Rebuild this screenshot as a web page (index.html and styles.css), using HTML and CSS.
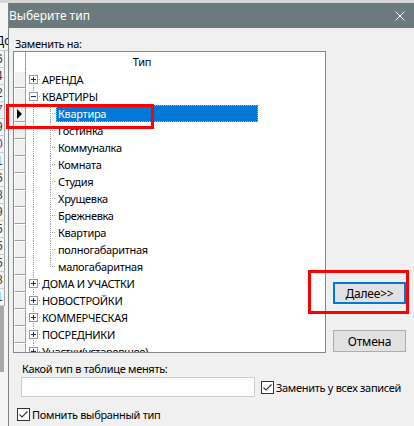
FILE: index.html
```html
<!DOCTYPE html>
<html lang="ru">
<head>
<meta charset="utf-8">
<title>Выберите тип</title>
<link rel="stylesheet" href="styles.css">
</head>
<body>
<div class="desk-top"></div>
<div class="desk">
  <!-- edge of the table window behind the dialog -->
  <div class="bg-app">
    <div class="bg-head"><span>Дс</span></div>
    <div class="bg-cell"><span>6</span></div>
    <div class="bg-cell"><span>4</span></div>
    <div class="bg-cell"><span>2</span></div>
    <div class="bg-cell red"><span>7</span></div>
    <div class="bg-cell"><span>9</span></div>
    <div class="bg-cell blue"><span>0</span></div>
    <div class="bg-cell"><span>1</span></div>
    <div class="bg-cell"><span>6</span></div>
    <div class="bg-cell"><span>8</span></div>
    <div class="bg-cell"><span>9</span></div>
    <div class="bg-cell"><span>5</span></div>
    <div class="bg-cell"><span>5</span></div>
    <div class="bg-cell"><span>5</span></div>
    <div class="bg-cell"><span>8</span></div>
    <div class="bg-cell"><span>1</span></div>
    <div class="bg-gray"></div>
  </div>

  <div class="dialog">
    <div class="titlebar">
      <span class="title">Выберите тип</span>
      <svg class="close" viewBox="0 0 10 10" width="10" height="10"><path d="M0.5 0.5L9.5 9.5M9.5 0.5L0.5 9.5" stroke="#fff" stroke-width="1"/></svg>
    </div>

    <div class="dlg-body">
      <div class="upper">
        <div class="left-col">
          <div class="caption">Заменить на:</div>
          <div class="grid">
            <div class="grid-head">
              <div class="rh-head"></div>
              <div class="col-head">Тип</div>
            </div>
            <div class="row"><div class="rh"></div><div class="cell root first"><svg class="exp" viewBox="0 0 9 9"><rect x="0.5" y="0.5" width="8" height="8" fill="#fff" stroke="#8e9ba6"/><path d="M2 4.5h5M4.5 2v5" stroke="#1c2d5a"/></svg><span class="lbl">АРЕНДА</span></div></div>
            <div class="row"><div class="rh"></div><div class="cell root"><svg class="exp" viewBox="0 0 9 9"><rect x="0.5" y="0.5" width="8" height="8" fill="#fff" stroke="#8e9ba6"/><path d="M2 4.5h5" stroke="#1c2d5a"/></svg><span class="lbl">КВАРТИРЫ</span></div></div>
            <div class="row"><div class="rh"><i class="cur"></i></div><div class="cell child"><span class="lbl sel">Квартира</span></div></div>
            <div class="row"><div class="rh"></div><div class="cell child"><span class="lbl">Гостинка</span></div></div>
            <div class="row"><div class="rh"></div><div class="cell child"><span class="lbl">Коммуналка</span></div></div>
            <div class="row"><div class="rh"></div><div class="cell child"><span class="lbl">Комната</span></div></div>
            <div class="row"><div class="rh"></div><div class="cell child"><span class="lbl">Студия</span></div></div>
            <div class="row"><div class="rh"></div><div class="cell child"><span class="lbl">Хрущевка</span></div></div>
            <div class="row"><div class="rh"></div><div class="cell child"><span class="lbl">Брежневка</span></div></div>
            <div class="row"><div class="rh"></div><div class="cell child"><span class="lbl">Квартира</span></div></div>
            <div class="row"><div class="rh"></div><div class="cell child"><span class="lbl">полногабаритная</span></div></div>
            <div class="row"><div class="rh"></div><div class="cell child last"><span class="lbl">малогабаритная</span></div></div>
            <div class="row"><div class="rh"></div><div class="cell root"><svg class="exp" viewBox="0 0 9 9"><rect x="0.5" y="0.5" width="8" height="8" fill="#fff" stroke="#8e9ba6"/><path d="M2 4.5h5M4.5 2v5" stroke="#1c2d5a"/></svg><span class="lbl">ДОМА И УЧАСТКИ</span></div></div>
            <div class="row"><div class="rh"></div><div class="cell root"><svg class="exp" viewBox="0 0 9 9"><rect x="0.5" y="0.5" width="8" height="8" fill="#fff" stroke="#8e9ba6"/><path d="M2 4.5h5M4.5 2v5" stroke="#1c2d5a"/></svg><span class="lbl">НОВОСТРОЙКИ</span></div></div>
            <div class="row"><div class="rh"></div><div class="cell root"><svg class="exp" viewBox="0 0 9 9"><rect x="0.5" y="0.5" width="8" height="8" fill="#fff" stroke="#8e9ba6"/><path d="M2 4.5h5M4.5 2v5" stroke="#1c2d5a"/></svg><span class="lbl">КОММЕРЧЕСКАЯ</span></div></div>
            <div class="row"><div class="rh"></div><div class="cell root"><svg class="exp" viewBox="0 0 9 9"><rect x="0.5" y="0.5" width="8" height="8" fill="#fff" stroke="#8e9ba6"/><path d="M2 4.5h5M4.5 2v5" stroke="#1c2d5a"/></svg><span class="lbl">ПОСРЕДНИКИ</span></div></div>
            <div class="row"><div class="rh"></div><div class="cell root"><svg class="exp" viewBox="0 0 9 9"><rect x="0.5" y="0.5" width="8" height="8" fill="#fff" stroke="#8e9ba6"/><path d="M2 4.5h5M4.5 2v5" stroke="#1c2d5a"/></svg><span class="lbl">Участки(устаревшее)</span></div></div>
          </div>
        </div>
        <div class="right-col">
          <button class="btn default">Далее&gt;&gt;</button>
          <button class="btn cancel">Отмена</button>
        </div>
      </div>

      <div class="bottom">
        <div class="bottom-caption">Какой тип в таблице менять:</div>
        <div class="bottom-row">
          <div class="textbox"></div>
          <label class="check">
            <svg class="box" viewBox="0 0 13 13" width="13" height="13"><rect x="0.5" y="0.5" width="12" height="12" fill="#fff" stroke="#333"/><path d="M2.5 6.5L5 9L10.5 3.5" fill="none" stroke="#333" stroke-width="1.1"/></svg>
            <span>Заменить у всех записей</span>
          </label>
        </div>
        <label class="check remember">
          <svg class="box" viewBox="0 0 13 13" width="13" height="13"><rect x="0.5" y="0.5" width="12" height="12" fill="#fff" stroke="#333"/><path d="M2.5 6.5L5 9L10.5 3.5" fill="none" stroke="#333" stroke-width="1.1"/></svg>
          <span>Помнить выбранный тип</span>
        </label>
      </div>
    </div>
  </div>
</div>

<!-- annotation frames drawn over the dialog -->
<div class="mark mark-row"></div>
<div class="mark mark-btn"></div>
</body>
</html>
```

FILE: styles.css
```css
* {
  box-sizing: border-box;
}

html,
body {
  margin: 0;
  padding: 0;
}

body {
  position: relative;
  width: 414px;
  height: 426px;
  overflow: hidden;
  background: #f0f0f0;
  color: #000;
  font-family: "Noto Sans", "Liberation Sans", sans-serif;
  font-size: 11px;
  letter-spacing: -0.3px;
}

/* desktop strip above the dialog */
.desk-top {
  height: 3px;
  background: #d5d6d6;
}

.desk {
  display: flex;
  height: 423px;
}

/* table window behind the dialog */
.bg-app {
  width: 8px;
  flex: none;
  overflow: hidden;
  display: flex;
  flex-direction: column;
  background: #f5f5f5;
  font-family: "Liberation Sans", sans-serif;
  font-size: 12px;
  letter-spacing: 0;
}

.bg-head {
  height: 48px;
  padding-top: 30px;
  border-bottom: 1px solid #c8c8c8;
}

.bg-head span,
.bg-cell span {
  display: block;
  margin-left: -4px;
  line-height: 16px;
  white-space: nowrap;
}

.bg-cell {
  height: 17px;
  width: 5px;
  flex: none;
  overflow: hidden;
  border-bottom: 1px solid #c8c8c8;
  border-right: 1px solid #a8a8a8;
  color: #3a3a3a;
}

.bg-cell.red {
  color: #b3262a;
}

.bg-cell.blue {
  color: #5b2a8c;
}

.bg-gray {
  height: 66px;
  width: 4px;
  background: #a9a9a9;
  flex: none;
}

/* dialog window */
.dialog {
  flex: 1;
  display: flex;
  flex-direction: column;
  border-left: 1px solid #7b878a;
  background: #f0f0f0;
}

.titlebar {
  height: 25px;
  flex: none;
  display: flex;
  align-items: center;
  justify-content: space-between;
  padding-right: 9px;
  background: #6b7a7d;
  color: #fff;
}

.title {
  font-size: 12px;
  line-height: 16px;
  letter-spacing: 0;
}

.close {
  display: block;
}

.dlg-body {
  padding-top: 9px;
}

.upper {
  display: flex;
}

.left-col {
  display: flex;
  flex-direction: column;
}

.caption {
  height: 14px;
  line-height: 14px;
  padding-left: 6px;
}

/* tree grid */
.grid {
  margin-left: 4px;
  width: 313px;
  height: 302px;
  overflow: hidden;
  border: 1px solid #828790;
  background: #fff;
}

.grid-head {
  display: flex;
  height: 19px;
}

.rh-head {
  width: 12px;
  flex: none;
  border-right: 1px solid #a0a0a0;
}

.col-head {
  width: 232px;
  text-align: center;
  line-height: 20px;
}

.row {
  display: flex;
  height: 17px;
}

.rh {
  width: 12px;
  flex: none;
  display: flex;
  align-items: center;
  padding-left: 2px;
  background: #f0f0f0;
  border-top: 1px solid #fff;
  border-left: 1px solid #fff;
  border-right: 1px solid #a0a0a0;
  border-bottom: 1px solid #a0a0a0;
}

.cur {
  width: 0;
  height: 0;
  border-left: 5px solid #000;
  border-top: 5px solid transparent;
  border-bottom: 5px solid transparent;
}

.cell {
  width: 232px;
  flex: none;
  display: flex;
  align-items: center;
  white-space: nowrap;
  background-repeat: no-repeat;
}

/* dotted guide lines of the tree */
.root {
  background-image:
    repeating-linear-gradient(to bottom, #a0a0a0 0 1px, transparent 1px 2px),
    repeating-linear-gradient(to right, #a0a0a0 0 1px, transparent 1px 2px);
  background-size: 1px 17px, 8px 1px;
  background-position: 7px 0, 7px 8px;
}

.root.first {
  background-size: 1px 9px, 8px 1px;
  background-position: 7px 8px, 7px 8px;
}

.child {
  background-image:
    repeating-linear-gradient(to bottom, #a0a0a0 0 1px, transparent 1px 2px),
    repeating-linear-gradient(to bottom, #a0a0a0 0 1px, transparent 1px 2px),
    repeating-linear-gradient(to right, #a0a0a0 0 1px, transparent 1px 2px);
  background-size: 1px 17px, 1px 17px, 6px 1px;
  background-position: 7px 0, 24px 0, 24px 8px;
}

.child.last {
  background-size: 1px 17px, 1px 9px, 6px 1px;
}

.exp {
  width: 9px;
  height: 9px;
  margin-left: 3px;
  flex: none;
  display: block;
}

.root .lbl {
  margin-left: 4px;
}

.child .lbl {
  margin-left: 30px;
  padding: 0 2px;
  height: 17px;
  line-height: 17px;
}

.child .lbl.sel {
  flex: 1;
  background: #0078d7;
  color: #fff;
  border: 1px dotted #f0a64a;
  padding: 0 1px;
  line-height: 15px;
}

/* buttons */
.right-col {
  display: flex;
  flex-direction: column;
  padding-top: 245px;
  margin-left: 7px;
}

.btn {
  width: 73px;
  height: 22px;
  padding: 0;
  background: #e1e1e1;
  border: 1px solid #adadad;
  border-radius: 0;
  color: #000;
  font-family: inherit;
  font-size: 12px;
  letter-spacing: -0.2px;
}

.btn.default {
  border: 2px solid #0078d7;
}

.btn.cancel {
  margin-top: 26px;
}

/* lower part */
.bottom {
  padding-top: 9px;
}

.bottom-caption {
  height: 14px;
  line-height: 14px;
  padding-left: 13px;
}

.bottom-row {
  display: flex;
  align-items: center;
  margin-top: 1px;
  padding-left: 12px;
}

.textbox {
  width: 234px;
  height: 20px;
  background: #fff;
  border: 1px solid #cccccc;
}

.check {
  display: flex;
  align-items: center;
  gap: 2px;
}

.bottom-row .check {
  margin-left: 6px;
}

.box {
  display: block;
  flex: none;
}

.remember {
  margin-top: 10px;
  padding-left: 8px;
}

/* red annotation frames */
.mark {
  position: absolute;
  border: 3px solid #ff0000;
}

.mark-row {
  left: 6px;
  top: 104px;
  width: 148px;
  height: 25px;
}

.mark-btn {
  left: 308px;
  top: 270px;
  width: 101px;
  height: 44px;
}
```
